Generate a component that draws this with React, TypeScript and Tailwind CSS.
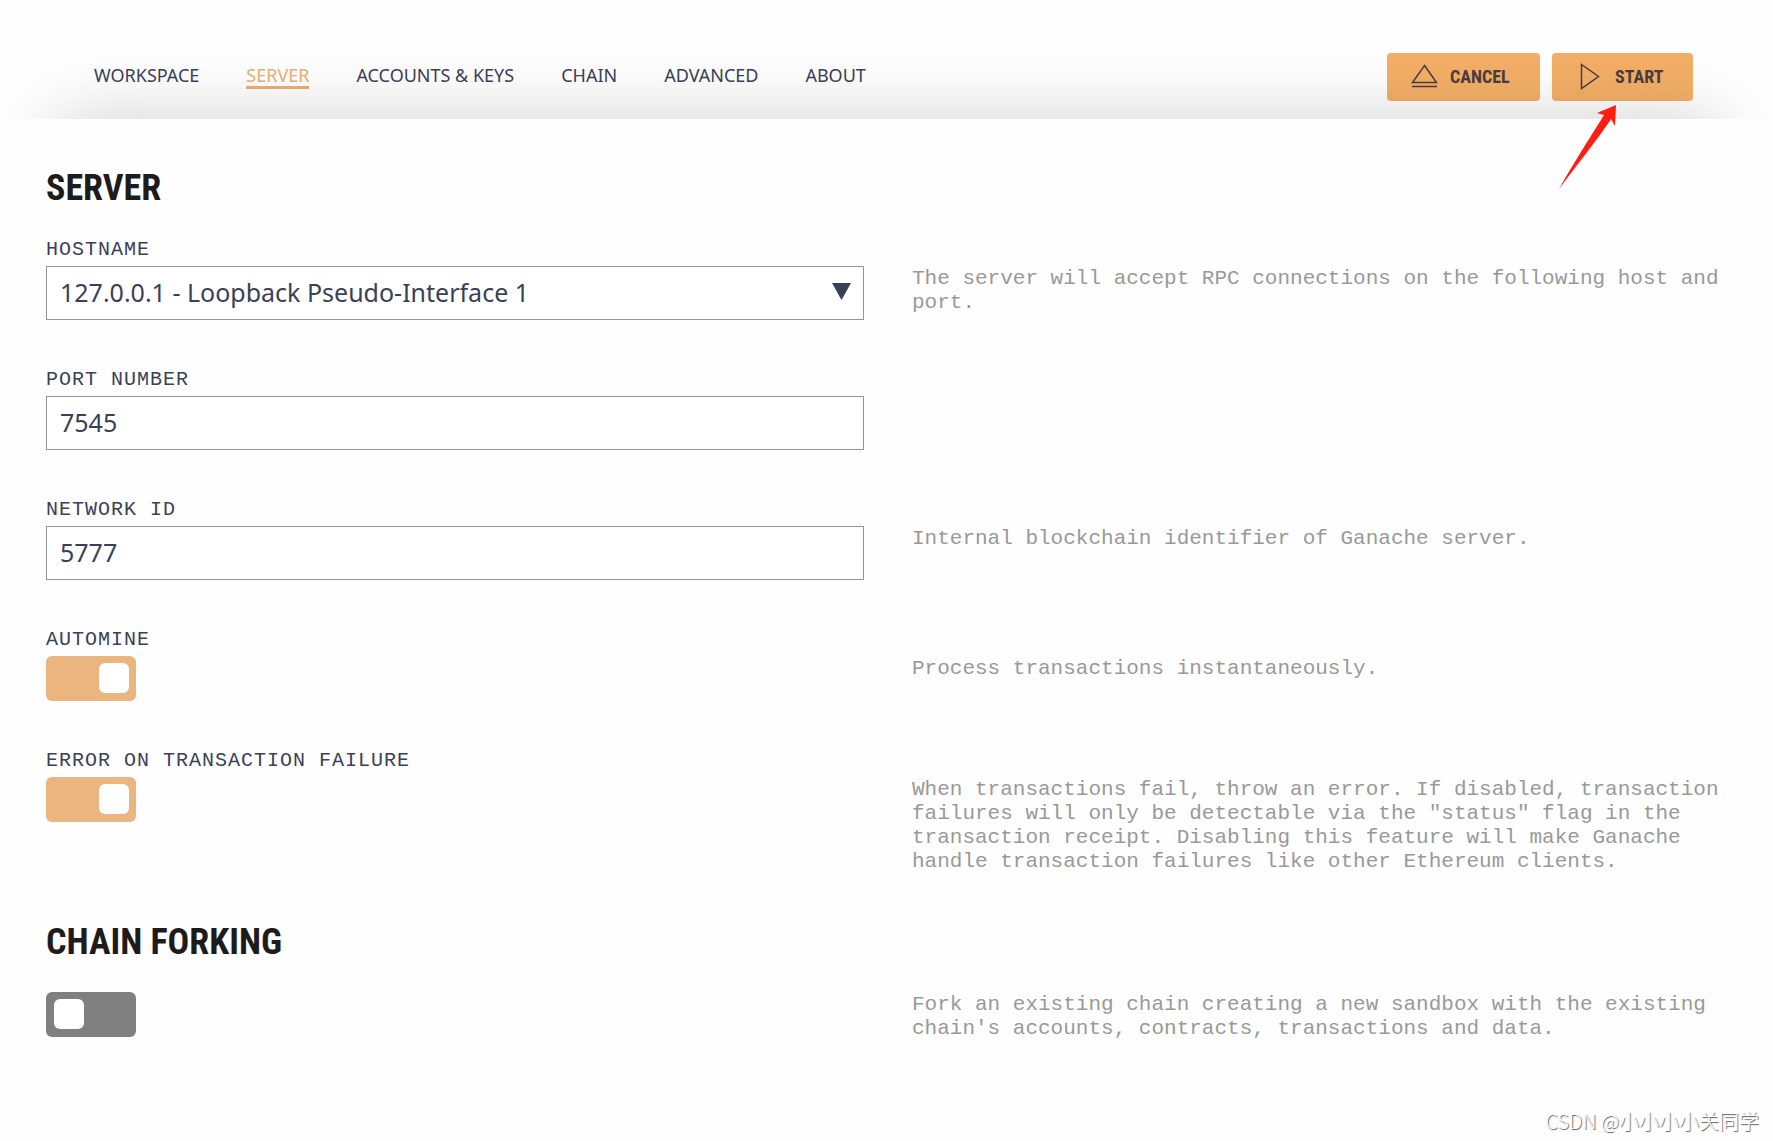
import { useState } from 'react'

interface RowProps {
  id: string
  label?: string
  help?: string
  children: React.ReactNode
}

const NAV_ITEMS = [
  'WORKSPACE',
  'SERVER',
  'ACCOUNTS & KEYS',
  'CHAIN',
  'ADVANCED',
  'ABOUT',
]

const Row: React.FC<RowProps> = ({ id, label, help, children }) => (
  <div className="grid grid-cols-2 gap-12">
    <div>
      {label && (
        <label
          htmlFor={id}
          className="mb-[5px] block font-['Liberation_Mono',monospace] text-[20px] leading-[23px] tracking-[1px] text-[#3a4158]"
        >
          {label}
        </label>
      )}
      {children}
    </div>
    {help && (
      <p
        className={`font-['Liberation_Mono',monospace] text-[21px] leading-6 text-[#999999] ${label ? 'pt-[29px]' : 'pt-px'}`}
      >
        {help}
      </p>
    )}
  </div>
)

interface TextFieldProps {
  id: string
  value: string
  onChange: (value: string) => void
}

const TextField: React.FC<TextFieldProps> = ({ id, value, onChange }) => (
  <input
    id={id}
    type="text"
    value={value}
    onChange={(e) => onChange(e.target.value)}
    className="block h-[54px] w-full border border-[#969696] bg-white px-[13px] pb-0.5 font-['Noto_Sans',sans-serif] text-[25px] text-[#3a4156] outline-none"
  />
)

interface ToggleProps {
  id: string
  name?: string
  defaultChecked?: boolean
}

const Toggle: React.FC<ToggleProps> = ({ id, name, defaultChecked }) => (
  <input
    id={id}
    type="checkbox"
    role="switch"
    aria-label={name}
    defaultChecked={defaultChecked}
    className="flex h-[45px] w-[90px] cursor-pointer appearance-none items-start justify-start rounded-[6px] bg-[#808080] pt-[7px] pr-[7px] pl-2 before:size-[30px] before:rounded-[6px] before:bg-white before:content-[''] checked:justify-end checked:bg-[#eab57e]"
  />
)

const Header = () => (
  <header className="flex h-[119px] items-start justify-between pr-20 pl-[94px]">
    <nav className="flex gap-[47px] pt-16">
      {NAV_ITEMS.map((item) => (
        <a
          key={item}
          href="#"
          className={`border-b-3 font-['Noto_Sans',sans-serif] text-[18px] leading-[22px] ${
            item === 'SERVER'
              ? 'border-[#e8b174] text-[#e8b174]'
              : 'border-transparent text-[#3a4158]'
          }`}
        >
          {item}
        </a>
      ))}
    </nav>
    <div className="flex gap-3 pt-[53px] font-['Roboto_Condensed','Liberation_Sans_Narrow',Roboto,sans-serif] text-[18px] font-bold text-[#4d3c40]">
      <button className="flex h-12 w-[153px] items-center gap-3 rounded-[4px] bg-[#f3af67] pb-0.5 pl-6">
        <svg
          className="h-6 w-[27px]"
          viewBox="0 0 27 24"
          fill="none"
          stroke="currentColor"
          strokeWidth="1.5"
        >
          <path d="M13.5 1.5 L25.5 18.5 H1.5 Z M1 22.5 H26" />
        </svg>
        CANCEL
      </button>
      <button className="flex h-12 w-[141px] items-center gap-[15px] rounded-[4px] bg-[#f3af67] pb-0.5 pl-7">
        <svg
          className="h-[27px] w-5"
          viewBox="0 0 20 27"
          fill="none"
          stroke="currentColor"
          strokeWidth="1.5"
        >
          <path d="M1.5 1.5 L18.5 13.5 L1.5 25.5 Z" />
        </svg>
        START
      </button>
    </div>
  </header>
)

const Heading: React.FC<{ children: string }> = ({ children }) => (
  <h2 className="mb-7 font-['Roboto_Condensed','Liberation_Sans_Narrow',Roboto,sans-serif] text-[36px] leading-[44px] font-bold text-[#1e1c1b]">
    {children}
  </h2>
)

const App = () => {
  const [port, setPort] = useState('7545')
  const [networkId, setNetworkId] = useState('5777')

  return (
    <div className="relative flex min-h-screen flex-col overflow-hidden bg-[#fefefe]">
      <Header />
      {/* the shadow falls upwards, over the header */}
      <main className="relative flex-1 bg-[#fefefe] pt-[47px] pr-[43px] pb-16 pl-[46px] shadow-[0_-54px_70px_-58px_rgba(0,0,0,0.2)]">
        <section className="mb-[46px]">
          <Heading>SERVER</Heading>
          <div className="flex flex-col gap-12">
            <Row
              id="hostname"
              label="HOSTNAME"
              help="The server will accept RPC connections on the following host and port."
            >
              <div className="relative">
                <select
                  id="hostname"
                  className="block h-[54px] w-full appearance-none border border-[#969696] bg-white px-[13px] font-['Noto_Sans',sans-serif] text-[25px] text-[#3a4156] outline-none"
                >
                  <option>127.0.0.1 - Loopback Pseudo-Interface 1</option>
                </select>
                <svg
                  className="pointer-events-none absolute top-[17px] right-[13px] h-[17px] w-[19px]"
                  viewBox="0 0 19 17"
                >
                  <path d="M0 0 H19 L9.5 17 Z" fill="#3a4156" />
                </svg>
              </div>
            </Row>
            <Row id="port" label="PORT NUMBER">
              <TextField id="port" value={port} onChange={setPort} />
            </Row>
            <Row
              id="network"
              label="NETWORK ID"
              help="Internal blockchain identifier of Ganache server."
            >
              <TextField
                id="network"
                value={networkId}
                onChange={setNetworkId}
              />
            </Row>
            <Row
              id="automine"
              label="AUTOMINE"
              help="Process transactions instantaneously."
            >
              <Toggle id="automine" defaultChecked />
            </Row>
            <Row
              id="tx-error"
              label="ERROR ON TRANSACTION FAILURE"
              help={`When transactions fail, throw an error. If disabled, transaction failures will only be detectable via the "status" flag in the transaction receipt. Disabling this feature will make Ganache handle transaction failures like other Ethereum clients.`}
            >
              <Toggle id="tx-error" defaultChecked />
            </Row>
          </div>
        </section>
        <section>
          <Heading>CHAIN FORKING</Heading>
          <Row
            id="forking"
            help="Fork an existing chain creating a new sandbox with the existing chain's accounts, contracts, transactions and data."
          >
            <Toggle id="forking" name="Chain forking" />
          </Row>
        </section>
      </main>

      {/* pointer to the start button */}
      <svg
        className="pointer-events-none absolute top-[104px] right-[156px] z-10 h-[85px] w-[58px]"
        viewBox="0 0 58 85"
      >
        <path
          d="M57 1 L38 9 L45 11 C36 26 15 58 0 85 C18 61 42 31 52 15 L56 22 Z"
          fill="#ff1f12"
        />
      </svg>

      <div className="absolute right-[14px] bottom-1.5 font-['Noto_Sans_CJK_SC',sans-serif] text-[20px] leading-7 font-light text-white [text-shadow:1px_1px_1px_#555]">
        CSDN @小小小小关同学
      </div>
    </div>
  )
}

export default App
